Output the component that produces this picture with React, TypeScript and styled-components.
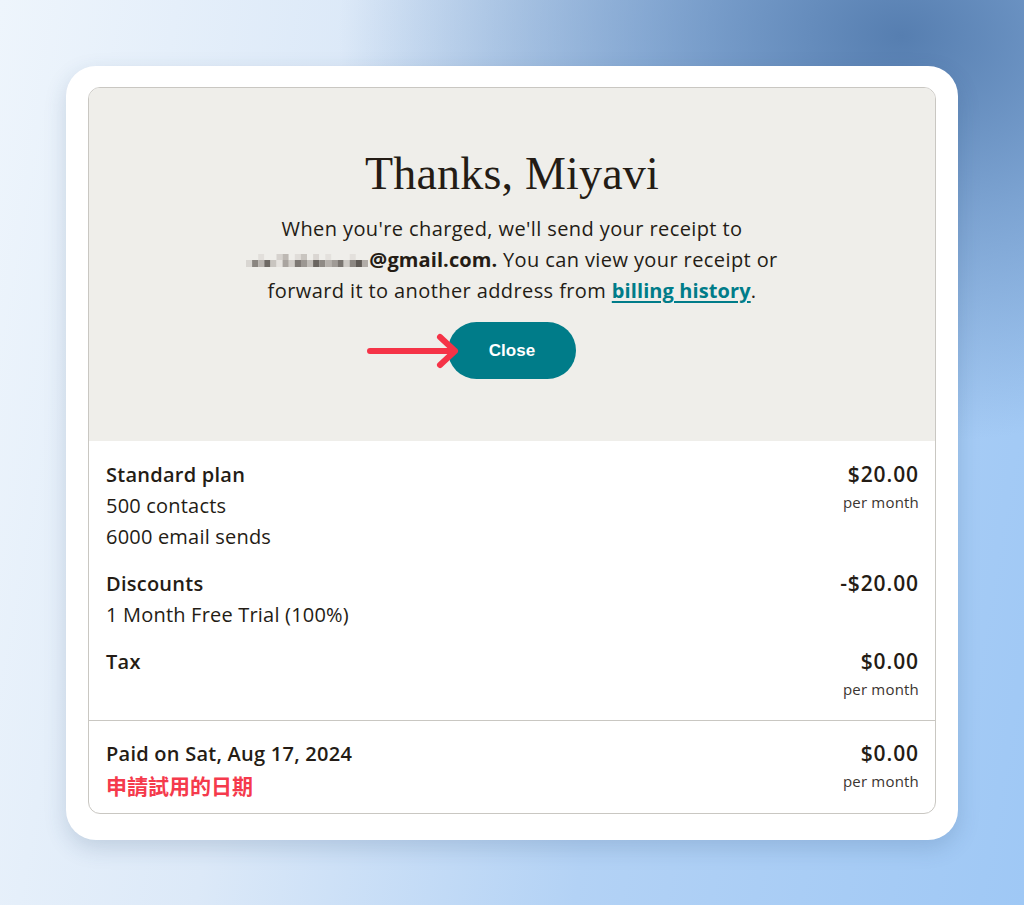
import styled, { createGlobalStyle } from 'styled-components';

const GlobalStyle = createGlobalStyle`
  html, body {
    margin: 0;
    padding: 0;
  }
  body {
    font-family: "Open Sans", "Liberation Sans", sans-serif;
    color: #241c15;
  }
`;

const Page = styled.div`
  width: 1024px;
  height: 905px;
  overflow: hidden;
  padding-top: 66px;
  box-sizing: border-box;
  background:
    radial-gradient(ellipse 55% 45% at 88% 4%, rgba(86, 126, 176, 1) 0%, rgba(96, 136, 186, 0.6) 45%, rgba(120, 160, 210, 0) 100%),
    linear-gradient(100deg, #eef5fc 0%, #dce9f8 30%, #b3d2f5 62%, #9fc8f5 100%);
`;

const Frame = styled.div`
  width: 892px;
  margin: 0 auto;
  background: #fff;
  border-radius: 30px;
  padding: 21px 22px 26px;
  box-sizing: border-box;
  box-shadow: 0 8px 22px rgba(40, 70, 110, 0.18);
`;

const Card = styled.div`
  border: 1px solid #c9c7c2;
  border-radius: 12px;
  overflow: hidden;
  background: #fff;
`;

const Hero = styled.div`
  background: #efeeea;
  padding: 58px 20px 62px;
  display: flex;
  flex-direction: column;
  align-items: center;
  text-align: center;
`;

const Title = styled.h1`
  margin: 0;
  font-family: "Liberation Serif", "DejaVu Serif", serif;
  font-weight: 400;
  font-size: 46px;
  line-height: 56px;
  letter-spacing: 0.2px;
  color: #241c15;
`;

const Lead = styled.p`
  margin: 11px 0 0;
  font-size: 20px;
  line-height: 31px;
  letter-spacing: 0.4px;
  color: #241c15;
`;

const Email = styled.strong`
  font-weight: 700;
  letter-spacing: 0.1px;
`;

const Mosaic = styled.svg`
  display: inline-block;
  vertical-align: -1px;
  margin-right: 1px;
`;

const Link = styled.a`
  color: #007c89;
  font-weight: 700;
  letter-spacing: 0.1px;
  text-decoration: underline;
  text-underline-offset: 3px;
`;

const ButtonWrap = styled.div`
  position: relative;
  margin-top: 16px;
`;

const CloseButton = styled.button`
  display: block;
  width: 128px;
  height: 57px;
  border: none;
  border-radius: 29px;
  background: #007c89;
  color: #fff;
  font-family: "Liberation Sans", Arial, sans-serif;
  font-weight: 700;
  font-size: 17px;
  cursor: pointer;
`;

const Arrow = styled.svg`
  position: absolute;
  left: -82px;
  top: 10px;
`;

const Section = styled.div<{ $footer?: boolean }>`
  display: flex;
  flex-direction: column;
  gap: 16px;
  padding: ${(p) => (p.$footer ? '17px 16px 12px 17px' : '18px 16px 18px 17px')};
  border-top: ${(p) => (p.$footer ? '1px solid #c9c7c2' : 'none')};
`;

const Row = styled.div`
  display: flex;
  justify-content: space-between;
  align-items: flex-start;
`;

const Col = styled.div<{ $right?: boolean }>`
  display: flex;
  flex-direction: column;
  align-items: ${(p) => (p.$right ? 'flex-end' : 'flex-start')};
`;

const Label = styled.div`
  font-size: 20px;
  line-height: 31px;
  letter-spacing: 0.25px;
  font-weight: 600;
`;

const Detail = styled.div`
  font-size: 20px;
  line-height: 31px;
  letter-spacing: 0.2px;
  font-weight: 400;
`;

const Amount = styled.div`
  font-size: 21px;
  line-height: 31px;
  letter-spacing: 0.9px;
  font-weight: 600;
`;

const Per = styled.div`
  font-size: 15px;
  line-height: 25px;
  letter-spacing: 0.2px;
  color: #3b3530;
`;

const Note = styled.div`
  font-family: "Noto Sans CJK TC", "Noto Sans CJK SC", sans-serif;
  font-size: 21px;
  line-height: 32px;
  font-weight: 700;
  color: #f53a4c;
`;

const mosaicCells = [
  '#d9d6d2', '#8a8580', '#b8b3ae', '#6e6964', '#c9c5c0', '#e6e3df', '#a9a49f', '#d0ccc7',
  '#7d7873', '#9c9792', '#c2beb9', '#6a6560', '#8f8a85', '#b6b1ac', '#a09b96', '#7a7570',
  '#cfcbc6', '#8c8782', '#5f5a55', '#b1aca7',
];

const mosaicTop = [
  '#efeeea', '#efeeea', '#e2dfdb', '#efeeea', '#efeeea', '#d6d2ce', '#bdb8b3', '#efeeea',
  '#e0ddd9', '#c9c5c0', '#efeeea', '#dad6d2', '#efeeea', '#e4e1dd', '#efeeea', '#efeeea',
  '#efeeea', '#e3e0dc', '#efeeea', '#efeeea',
];

const PixelEmail = () => (
  <Mosaic width="122" height="14" viewBox="0 0 122 14">
    {mosaicTop.map((c, i) => (
      <rect key={`t${i}`} x={i * 6.1} y={0} width={6.2} height={6} fill={c} />
    ))}
    {mosaicCells.map((c, i) => (
      <rect key={`b${i}`} x={i * 6.1} y={6} width={6.2} height={7} fill={c} />
    ))}
  </Mosaic>
);

export default function App() {
  return (
    <Page>
      <GlobalStyle />
      <Frame>
        <Card>
          <Hero>
            <Title>Thanks, Miyavi</Title>
            <Lead>
              When you're charged, we'll send your receipt to
              <br />
              <Email>
                <PixelEmail />@gmail.com.
              </Email>{' '}
              You can view your receipt or
              <br />
              forward it to another address from <Link href="#">billing history</Link>.
            </Lead>
            <ButtonWrap>
              <Arrow width="96" height="38" viewBox="0 0 96 38">
                <path
                  d="M4 19 H89 M74 5 L89 19 L74 33"
                  fill="none"
                  stroke="#f53347"
                  strokeWidth="6"
                  strokeLinecap="round"
                  strokeLinejoin="round"
                />
              </Arrow>
              <CloseButton>Close</CloseButton>
            </ButtonWrap>
          </Hero>

          <Section>
            <Row>
              <Col>
                <Label>Standard plan</Label>
                <Detail>500 contacts</Detail>
                <Detail>6000 email sends</Detail>
              </Col>
              <Col $right>
                <Amount>$20.00</Amount>
                <Per>per month</Per>
              </Col>
            </Row>
            <Row>
              <Col>
                <Label>Discounts</Label>
                <Detail>1 Month Free Trial (100%)</Detail>
              </Col>
              <Col $right>
                <Amount>-$20.00</Amount>
              </Col>
            </Row>
            <Row>
              <Col>
                <Label>Tax</Label>
              </Col>
              <Col $right>
                <Amount>$0.00</Amount>
                <Per>per month</Per>
              </Col>
            </Row>
          </Section>

          <Section $footer>
            <Row>
              <Col>
                <Label>Paid on Sat, Aug 17, 2024</Label>
                <Note>申請試用的日期</Note>
              </Col>
              <Col $right>
                <Amount>$0.00</Amount>
                <Per>per month</Per>
              </Col>
            </Row>
          </Section>
        </Card>
      </Frame>
    </Page>
  );
}
